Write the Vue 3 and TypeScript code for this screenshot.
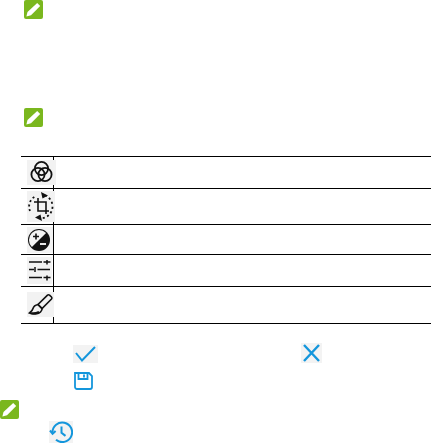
<script setup lang="ts">
const pencilPath = 'M13.2 3l3 3-9.2 9.300-4.600 1.200 1.100-4.500z'
</script>

<template>
  <div class="page">
    <svg class="green first" viewBox="0 0 19 19"><rect width="19" height="19" rx="2" fill="#7ab71e" /><path :d="pencilPath" fill="#fff" /></svg>
    <svg class="green second" viewBox="0 0 19 19"><rect width="19" height="19" rx="2" fill="#7ab71e" /><path :d="pencilPath" fill="#fff" /></svg>

    <div class="table">
      <div class="row r1">
        <div class="cell">
          <svg class="icon i1" viewBox="0 0 29 25" fill="none" stroke="#111" stroke-width="1.800">
            <circle cx="14.500" cy="8.500" r="6.600" /><circle cx="11" cy="14.500" r="6.600" /><circle cx="18" cy="14.500" r="6.600" />
          </svg>
        </div>
      </div>
      <div class="row r2">
        <div class="cell">
          <svg class="icon i2" viewBox="0 0 28 31" fill="none" stroke="#111">
            <path d="M18 4.500A11.500 11.500 0 0 1 25.500 15.500M25.500 16A11.500 11.500 0 0 1 12 27M3 20A11.500 11.500 0 0 1 9 5" stroke-width="1.800" stroke-dasharray="2 2.600" />
            <path d="M11 7v13h11M7 11h12v12" stroke-width="1.600" />
            <path d="M14 1l7 3.500-5.500 3zM15 30l-7-3.500 5.500-3z" fill="#111" stroke="none" />
          </svg>
        </div>
      </div>
      <div class="row r3">
        <div class="cell">
          <svg class="icon i3" viewBox="0 0 26 26">
            <circle cx="12" cy="13" r="11" fill="#111" />
            <path d="M4.900 20.100A10 10 0 0 1 19.100 5.900z" fill="#f4f4f4" />
            <path d="M9 6.500v6M6 9.500h6" stroke="#111" stroke-width="1.600" />
            <path d="M13 17h6" stroke="#fff" stroke-width="1.800" />
          </svg>
        </div>
      </div>
      <div class="row r4">
        <div class="cell">
          <svg class="icon i4" viewBox="0 0 25 27" fill="none" stroke="#111" stroke-width="1.500">
            <path d="M2 5h13M16.500 5h7M20 3v4.500M2 12.500h5M8 10v5M10.500 12.500h12.500M2 20.500h13M16.500 20.500h7M20 18.500v5" />
          </svg>
        </div>
      </div>
      <div class="row r5">
        <div class="cell">
          <svg class="icon i5" viewBox="0 0 27 25" fill="none" stroke="#111" stroke-width="1.600">
            <path d="M22.500 3.200l2 1.800c.7.700.5 1.400 0 2L15 16.500l-4-4 9.500-9.300c.7-.6 1.300-.6 2 0z" />
            <path d="M11 12.500c-3 .6-4.400 1.800-5 4-.4 1.700-1.500 3-3.500 4.500 4 1.500 9 1.200 11-1 1.300-1.400 1.700-2.800 1.500-3.500z" />
            <path d="M3 21c3 .6 6 .4 9-1" stroke-width="2.200" />
          </svg>
        </div>
      </div>
    </div>

    <div class="actions">
      <svg class="check" viewBox="0 0 25 18" fill="none" stroke="#1496dc" stroke-width="2"><path d="M3 8l6 7.500L22 2" /></svg>
      <svg class="cross" viewBox="0 0 21 20" fill="none" stroke="#1496dc" stroke-width="2.400"><path d="M3 2l15 16M18 2L3 18" /></svg>
    </div>
    <svg class="save" viewBox="0 0 21 18" fill="none" stroke="#1496dc" stroke-width="1.800">
      <path d="M2 1h14l3 3v11a2 2 0 0 1-2 2H4a2 2 0 0 1-2-2V1zM5.500 1v6h9V1M11 2.500v3" />
    </svg>
    <svg class="green third" viewBox="0 0 19 19"><rect width="19" height="19" rx="2" fill="#7ab71e" /><path :d="pencilPath" fill="#fff" /></svg>
    <svg class="history" viewBox="0 0 24 22" fill="none" stroke="#1496dc" stroke-width="2">
      <path d="M3.500 11.500A9.800 9.800 0 1 1 7 18.800" />
      <path d="M1 9.500l2.600 3.200L6.600 10" />
      <path d="M12.500 5.500v6.200l4 3.200" />
    </svg>
  </div>
</template>

<style scoped>
.page {
  width: 431px;
  height: 443px;
  overflow: hidden;
  display: flex;
  flex-direction: column;
  align-items: flex-start;
  background: #fff;
}
.green {
  display: block;
  width: 19px;
  height: 19px;
  flex: none;
}
.first {
  margin-left: 24px;
}
.second {
  margin-left: 24px;
  margin-top: 89px;
}
.third {
  margin-top: 10px;
}
.table {
  margin-top: 29px;
  margin-left: 21px;
  width: 410px;
  border-bottom: 1px solid #000;
  flex: none;
}
.row {
  border-top: 1px solid #000;
  box-sizing: border-box;
}
.r1 { height: 32px; }
.r2 { height: 36px; }
.r3 { height: 30px; }
.r4 { height: 32px; }
.r5 { height: 37px; }
.cell {
  width: 33px;
  height: 100%;
  box-sizing: border-box;
  border-right: 1px solid #000;
}
.r1 .cell { padding-top: 3px; }
.r2 .cell { padding-top: 2px; }
.r3 .cell { padding-top: 2px; }
.r4 .cell { padding-top: 2px; }
.r5 .cell { padding-top: 5px; }
.icon {
  display: block;
  position: relative;
  background: #f2f2f2;
  margin-left: 6px;
}
.i1 { width: 29px; height: 25px; }
.i2 { width: 28px; height: 31px; }
.i3 { width: 26px; height: 26px; }
.i4 { width: 25px; height: 27px; }
.i5 { width: 27px; height: 25px; }
.actions {
  display: flex;
  align-items: flex-start;
  margin-top: 19px;
  margin-left: 73px;
  flex: none;
}
.check {
  width: 25px;
  height: 18px;
  margin-top: 2px;
  background: #f3f3f3;
  display: block;
}
.cross {
  width: 21px;
  height: 20px;
  margin-left: 203px;
  background: #f3f3f3;
  display: block;
}
.save {
  display: block;
  width: 21px;
  height: 18px;
  margin-top: 9px;
  margin-left: 73px;
  flex: none;
}
.history {
  display: block;
  width: 24px;
  height: 22px;
  margin-top: 2px;
  margin-left: 49px;
  background: #f3f3f3;
  flex: none;
}
</style>
